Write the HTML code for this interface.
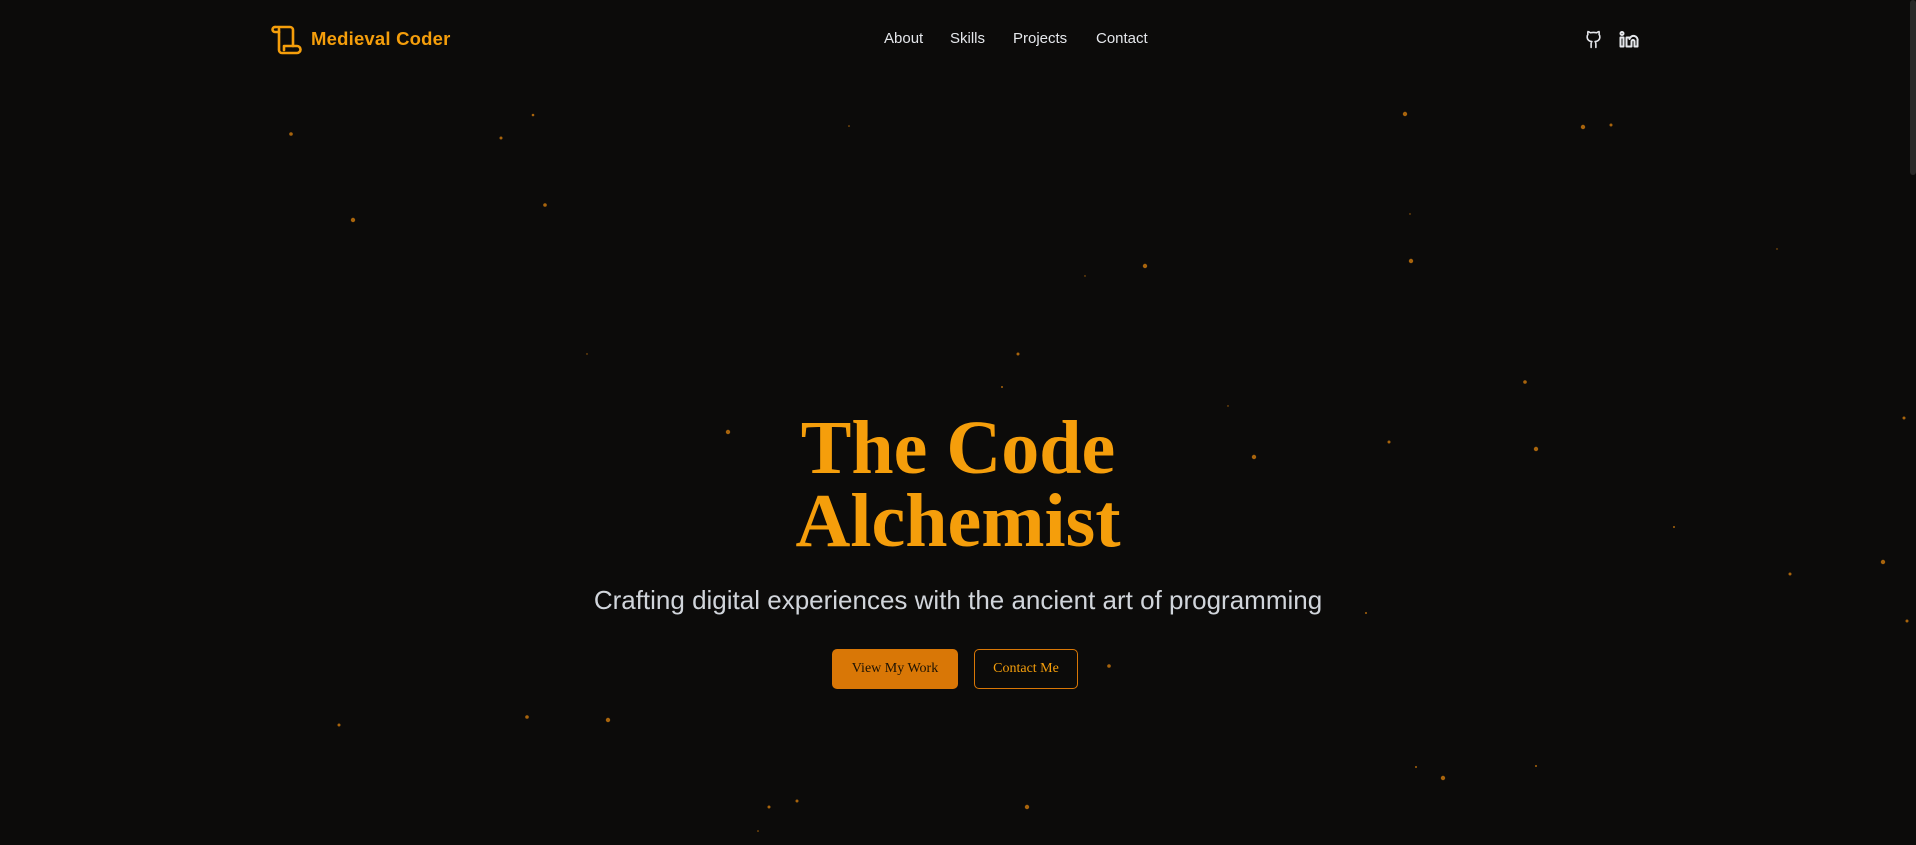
<!DOCTYPE html>
<html><head><meta charset="utf-8"><style>
html,body{margin:0;padding:0;width:1916px;height:845px;overflow:hidden;background:#0c0b0a;font-family:"Liberation Sans",sans-serif}
.abs{position:absolute}
#dots{position:absolute;left:0;top:0}
.logo{left:311px;top:28px;font-size:18.5px;font-weight:bold;color:#f59e0b;font-family:"Liberation Sans",sans-serif;letter-spacing:0.2px}
.nav a{position:absolute;top:30px;font-size:15px;color:#e5e7eb;text-decoration:none}
h1{position:absolute;left:0;width:1916px;top:412px;margin:0;text-align:center;font-family:"Liberation Serif",serif;font-weight:bold;font-size:76px;line-height:73px;color:#f59e0b}
.sub{left:0;width:1916px;top:585px;text-align:center;font-size:26px;color:#d1d5db}
.btn{position:absolute;top:649px;height:40px;box-sizing:border-box;border-radius:5px;font-size:14px;display:flex;align-items:center;justify-content:center;font-family:"Liberation Serif",serif}
.b1{left:832px;width:126px;background:#d97706;color:#1c1204}
.b2{left:974px;width:104px;border:1px solid #d97706;color:#f59e0b}
.sb{left:1910px;top:0;width:6px;height:175px;background:#2a2928;border-radius:3px}
</style></head><body>
<svg id="dots" width="1916" height="845">
<g fill="#a8640c">
<circle cx="291" cy="134" r="1.8"/><circle cx="501" cy="138" r="1.5"/><circle cx="533" cy="115" r="1.3"/><circle cx="353" cy="220" r="2.2"/><circle cx="545" cy="205" r="1.8"/><circle cx="849" cy="126" r="0.8"/><circle cx="1405" cy="114" r="2.2"/><circle cx="1583" cy="127" r="2.2"/><circle cx="1611" cy="125" r="1.5"/><circle cx="1411" cy="261" r="2.2"/><circle cx="1145" cy="266" r="2.2"/><circle cx="1410" cy="214" r="0.7"/><circle cx="1085" cy="276" r="0.7"/><circle cx="1777" cy="249" r="0.7"/><circle cx="587" cy="354" r="0.7"/><circle cx="1018" cy="354" r="1.5"/><circle cx="1002" cy="387" r="1"/><circle cx="1525" cy="382" r="1.8"/><circle cx="1228" cy="406" r="0.7"/><circle cx="728" cy="432" r="2.2"/><circle cx="1389" cy="442" r="1.5"/><circle cx="1536" cy="449" r="2.2"/><circle cx="1254" cy="457" r="2.2"/><circle cx="1904" cy="418" r="1.5"/><circle cx="1674" cy="527" r="1"/><circle cx="1790" cy="574" r="1.5"/><circle cx="1883" cy="562" r="2.2"/><circle cx="1366" cy="613" r="1"/><circle cx="1907" cy="621" r="1.5"/><circle cx="1109" cy="666" r="1.8"/><circle cx="527" cy="717" r="1.8"/><circle cx="608" cy="720" r="2.2"/><circle cx="339" cy="725" r="1.5"/><circle cx="1443" cy="778" r="2.2"/><circle cx="1416" cy="767" r="1"/><circle cx="1536" cy="766" r="1"/><circle cx="1027" cy="807" r="2.2"/><circle cx="769" cy="807" r="1.5"/><circle cx="797" cy="801" r="1.5"/><circle cx="758" cy="831" r="0.8"/>
</g></svg>
<svg class="abs" style="left:270px;top:24px" width="32" height="32" viewBox="0 0 32 32" fill="none" stroke="#f59e0b" stroke-width="2.6" stroke-linejoin="round" stroke-linecap="round">
<path d="M5 3h15a3 3 0 0 1 3 3v16"/><path d="M5 3a2.5 2.5 0 0 0 0 5h4"/><path d="M9 5v21a3 3 0 0 0 3 3h15a3 3 0 0 0 0-7H14v4"/>
</svg>
<div class="abs logo">Medieval Coder</div>
<div class="nav"><a style="left:884px">About</a><a style="left:950px">Skills</a><a style="left:1013px">Projects</a><a style="left:1096px">Contact</a></div>
<svg class="abs" style="left:1584px;top:30px" width="19" height="19" viewBox="0 0 24 24" fill="none" stroke="#e5e7eb" stroke-width="2" stroke-linecap="round" stroke-linejoin="round"><path d="M15 22v-4a4.8 4.8 0 0 0-1-3.5c3 0 6-2 6-5.5.08-1.25-.27-2.48-1-3.5.28-1.150.28-2.35 0-3.5 0 0-1 0-3 1.5-2.64-.5-5.36-.5-8 0C6 2 5 2 5 2c-.3 1.15-.3 2.35 0 3.5A5.4 5.4 0 0 0 4 9c0 3.5 3 5.5 6 5.5-.39.49-.68 1.05-.85 1.65-.17.6-.22 1.23-.15 1.85v4"/></svg>
<svg class="abs" style="left:1619px;top:31px" width="21" height="17" viewBox="0 0 21 17" fill="none" stroke="#e5e7eb" stroke-width="2" stroke-linejoin="round"><circle cx="3" cy="2.5" r="1.5"/><path d="M1.5 6.5h3v9h-3z"/><path d="M7.5 6.5h3v1.5a4 4 0 0 1 8 2v5.5h-3v-5a1.5 1.5 0 0 0-3 0v5h-5z"/></svg>
<h1>The Code<br>Alchemist</h1>
<div class="abs sub">Crafting digital experiences with the ancient art of programming</div>
<div class="btn b1">View My Work</div>
<div class="btn b2">Contact Me</div>
<div class="abs sb"></div>
</body></html>
